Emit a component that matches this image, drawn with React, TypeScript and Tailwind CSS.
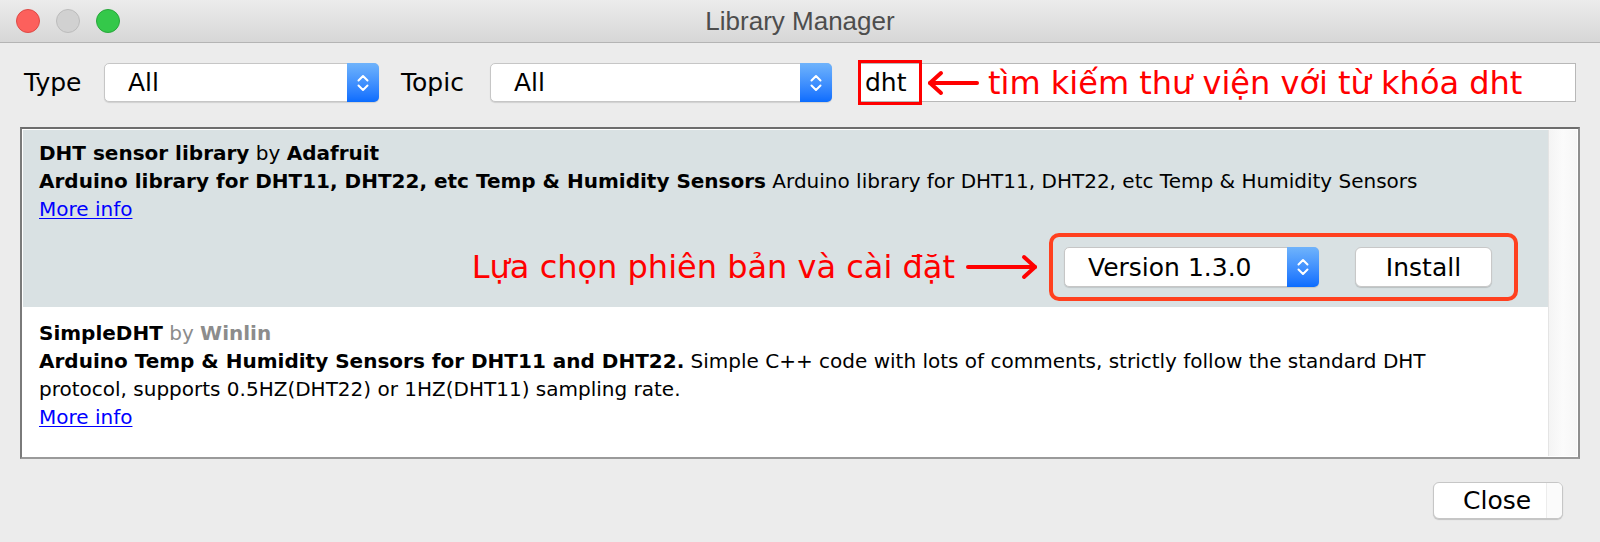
import React from "react";

// Mac-style stepper arrows inside the blue part of a popup button
function Chevrons() {
  return (
    <svg width="14" height="22" viewBox="0 0 14 22" fill="none" stroke="white" strokeWidth="2" strokeLinecap="round" strokeLinejoin="round">
      <path d="M2.5 8.5 L7 4 L11.5 8.5" />
      <path d="M2.5 13.5 L7 18 L11.5 13.5" />
    </svg>
  );
}

function Select({ label, className }: { label: string; className: string }) {
  return (
    <div className={`flex h-[39px] rounded-[5px] bg-white border border-[#c6c6c6] shadow-[0_1px_1px_rgba(0,0,0,0.12)] ${className}`}>
      <span className="flex-1 flex items-center pl-[23px] text-[25px] text-black leading-none">{label}</span>
      <span className="w-[32px] -my-px -mr-px flex items-center justify-center rounded-r-[5px] bg-linear-to-b from-[#6fb3fb] to-[#0a6cfe]">
        <Chevrons />
      </span>
    </div>
  );
}

function Arrow({ dir, width }: { dir: "left" | "right"; width: number }) {
  const w = width;
  return (
    <svg width={w} height="26" viewBox={`0 0 ${w} 26`} fill="none" stroke="#ff0000" strokeWidth="4" strokeLinecap="round" strokeLinejoin="round">
      {dir === "left" ? (
        <>
          <path d={`M4 13 H${w - 3}`} />
          <path d="M15 3 L4 13 L15 23" />
        </>
      ) : (
        <>
          <path d={`M3 13 H${w - 4}`} />
          <path d={`M${w - 15} 3 L${w - 4} 13 L${w - 15} 23`} />
        </>
      )}
    </svg>
  );
}

function MoreInfo() {
  return <a className="text-[#0000ff] underline underline-offset-[2px] decoration-1 w-fit">More info</a>;
}

export default function App() {
  return (
    <div className="w-[1600px] h-[542px] bg-[#ececec] flex flex-col overflow-hidden font-['DejaVu_Sans',sans-serif] text-black">
      {/* title bar */}
      <div className="h-[43px] shrink-0 grid grid-cols-[1fr_auto_1fr] items-center bg-linear-to-b from-[#ececec] to-[#d7d7d7] border-b border-[#b4b4b4]">
        <div className="flex items-center gap-[16px] pl-[16px]">
          <span className="w-[24px] h-[24px] rounded-full bg-[#fc605c] border border-[#de4a45]" />
          <span className="w-[24px] h-[24px] rounded-full bg-[#d1d1d1] border border-[#bcbcbc]" />
          <span className="w-[24px] h-[24px] rounded-full bg-[#34c84a] border border-[#28a73b]" />
        </div>
        <div className="font-['Liberation_Sans',sans-serif] text-[26px] text-[#4d4d4d] leading-none">Library Manager</div>
        <div />
      </div>

      {/* filter row */}
      <div className="flex items-center pt-[20px] pl-[24px] shrink-0">
        <span className="text-[25px] leading-none w-[80px]">Type</span>
        <Select label="All" className="w-[275px]" />
        <span className="text-[25px] leading-none ml-[22px] w-[89px]">Topic</span>
        <Select label="All" className="w-[342px]" />
        <div className="ml-[26px] w-[718px] h-[39px] bg-white border border-[#b8b8b8] flex items-center">
          <div className="-ml-px h-[45px] w-[64px] border-[3px] border-[#ff0000] flex items-center pl-[4px] text-[25px] leading-none">
            dht
          </div>
          <span className="ml-[4px] flex">
            <Arrow dir="left" width={54} />
          </span>
          <span className="ml-[8px] text-[32px] leading-none text-[#ff0000]">tìm kiếm thư viện với từ khóa dht</span>
        </div>
      </div>

      {/* library list */}
      <div className="mt-[25px] ml-[20px] w-[1560px] h-[332px] shrink-0 border-2 border-t-[#6d6d6d] border-l-[#7a7a7a] border-r-[#8e8e8e] border-b-[#9a9a9a] bg-white p-px flex text-[20px] leading-[28px]">
        <div className="flex-1 flex flex-col">
          <div className="h-[177px] bg-[#d9e1e3] pl-[16px] pt-[9px] flex flex-col">
            <p>
              <b>DHT sensor library</b> by <b>Adafruit</b>
            </p>
            <p>
              <b>Arduino library for DHT11, DHT22, etc Temp &amp; Humidity Sensors</b> Arduino library for DHT11, DHT22,
              etc Temp &amp; Humidity Sensors
            </p>
            <MoreInfo />
            <div className="mt-auto mb-[6px] pr-[30px] flex items-center justify-end">
              <span className="text-[32px] leading-none text-[#ff0000]">Lựa chọn phiên bản và cài đặt</span>
              <span className="ml-[10px] flex">
                <Arrow dir="right" width={74} />
              </span>
              <div className="ml-[10px] h-[68px] border-[4px] border-[#ff401f] rounded-[10px] flex items-center pl-[11px] pr-[22px] gap-[36px]">
                <Select label="Version 1.3.0" className="w-[255px] h-[40px]" />
                <button className="w-[137px] h-[40px] rounded-[6px] bg-white border border-[#c8c8c8] shadow-[0_1px_1px_rgba(0,0,0,0.15)] text-[25px] leading-none">
                  Install
                </button>
              </div>
            </div>
          </div>
          <div className="flex-1 bg-white pl-[16px] pt-[12px] flex flex-col">
            <p>
              <b>SimpleDHT</b> <span className="text-[#8c8c8c]">by</span>{" "}
              <b className="text-[#8c8c8c]">Winlin</b>
            </p>
            <p>
              <b>Arduino Temp &amp; Humidity Sensors for DHT11 and DHT22.</b> Simple C++ code with lots of comments,
              strictly follow the standard DHT
              <br />
              protocol, supports 0.5HZ(DHT22) or 1HZ(DHT11) sampling rate.
            </p>
            <MoreInfo />
          </div>
        </div>
        <div className="w-[29px] bg-linear-to-r from-[#f4f4f4] via-[#fbfbfb] to-[#f6f6f6] border-l border-[#e4e4e4]" />
      </div>

      {/* footer */}
      <div className="mt-[23px] pr-[37px] flex justify-end">
        <button className="w-[130px] h-[37px] rounded-[6px] bg-white border border-[#c6c6c6] shadow-[0_1px_1px_rgba(0,0,0,0.18)] flex overflow-hidden">
          <span className="flex-1 flex items-center pl-[29px] text-[25px] leading-none">Close</span>
          <span className="w-[16px] border-l border-[#ececec] bg-[#fbfbfb]" />
        </button>
      </div>
    </div>
  );
}
